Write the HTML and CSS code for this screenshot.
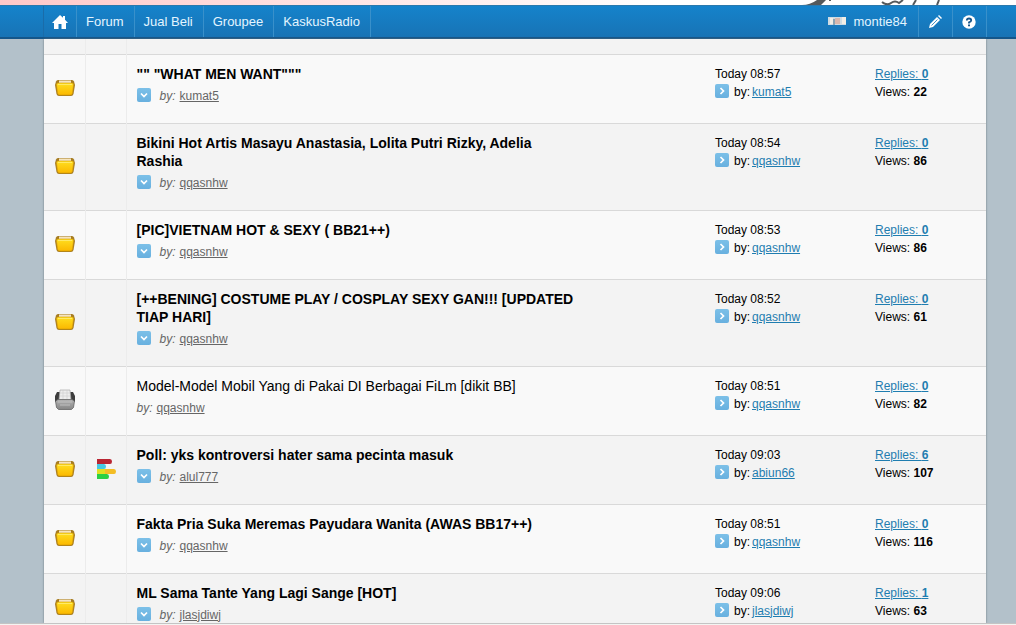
FILE: index.html
```html
<!DOCTYPE html>
<html lang="id">
<head>
<meta charset="utf-8">
<title>Forum</title>
<link rel="stylesheet" href="styles.css">
</head>
<body>
<svg class="defs" aria-hidden="true">
  <defs>
    <linearGradient id="gold" x1="0" y1="0" x2="0" y2="1"><stop offset="0" stop-color="#ffdf20"/><stop offset="1" stop-color="#fbb800"/></linearGradient>
    <linearGradient id="grey" x1="0" y1="0" x2="0" y2="1"><stop offset="0" stop-color="#b4b4b4"/><stop offset="1" stop-color="#858585"/></linearGradient>
    <linearGradient id="sky" x1="0" y1="0" x2="0" y2="1"><stop offset="0" stop-color="#7cc0e8"/><stop offset="1" stop-color="#68b0df"/></linearGradient>
  </defs>
  <symbol id="folder" viewBox="0 0 22 18">
    <path d="M4 1h14q1.500 0 2 1.500L21 6l-1.500 9q-.5 2-2.500 2H5q-2 0-2.500-2L1 6l1-3.500Q2.500 1 4 1z" fill="#a67c22"/>
    <path d="M5 1.500h12v3H5z" fill="#f5e4c0"/>
    <path d="M2.500 5.500Q2.500 4 4 4h14q1.500 0 1.500 1.500l-1 8.500q-.3 2-2 2h-11q-1.700 0-2-2z" fill="url(#gold)" stroke="#d39a08" stroke-width=".6"/>
    <path d="M4 5.500h14" stroke="#ffea66"/>
  </symbol>
  <symbol id="folder-closed" viewBox="0 0 22 22">
    <path d="M3 3h4v10H1V7zM15 3h4l2 4v6h-6z" fill="#3d3d3d"/>
    <path d="M6 1h10l1 10H5z" fill="#ededed" stroke="#aaa" stroke-width=".7"/>
    <path d="M6 4h10M6 7h10M9 1v10M13 1v10" stroke="#ccc" stroke-width=".6"/>
    <path d="M1.500 12L4 10.500h14l2.500 1.500-1 6.500-2 2h-13l-2-2z" fill="url(#grey)" stroke="#646464" stroke-width=".8"/>
    <path d="M4 13h14M6 16h10" stroke="#c8c8c8" stroke-width=".8"/>
  </symbol>
  <symbol id="down" viewBox="0 0 14 14"><rect width="14" height="14" rx="2" fill="url(#sky)"/><path d="M4 5.500l3 3 3-3" fill="none" stroke="#fff" stroke-width="1.700"/></symbol>
  <symbol id="next" viewBox="0 0 14 14"><rect width="14" height="14" rx="2" fill="url(#sky)"/><path d="M5.500 4l3 3-3 3" fill="none" stroke="#fff" stroke-width="1.700"/></symbol>
</svg>

<div class="banner">
  <svg class="script" viewBox="0 0 150 5" aria-hidden="true"><path d="M2 5q8 0 15-5h9l-5 5z" fill="#55595b"/><g fill="none" stroke="#55595b" stroke-width="2"><path d="M30 0v1M82 2q5 4 9 1t8 0l4-3M113 5l3-5M137 5l2-5"/></g></svg>
</div>
<nav class="bar">
  <div class="bar-inner">
    <a class="tab home" href="#" aria-label="Home"><svg width="16" height="14" viewBox="0 0 16 14"><path d="M8 0l3 2.800V1h2v3.700L16 8h-2v6H9.500V9h-3v5H2V8H0z" fill="#fff"/></svg></a>
    <a class="tab" href="#">Forum</a>
    <a class="tab" href="#">Jual Beli</a>
    <a class="tab" href="#">Groupee</a>
    <a class="tab" href="#">KaskusRadio</a>
    <a class="user" href="#"><svg width="18" height="8" viewBox="0 0 18 8" aria-hidden="true"><path d="M0 0h18v8H0z" fill="#cfdbe2"/><path d="M2 1h3v6H2zM14 0h4v7h-4z" fill="#f2eee6"/><path d="M7 1h5v6H7z" fill="#d9b7ad"/><path d="M5 2h2v6H5z" fill="#8ba3b3"/></svg>montie84</a>
    <a class="tool" href="#" aria-label="Edit"><svg width="14" height="14" viewBox="0 0 14 14"><path d="M1 13l1-4 7-7 3 3-7 7z" fill="#fff"/><path d="M10 1l1-1 3 3-1 1z" fill="#fff"/><path d="M3.500 10.500l6-6" stroke="#1878ba" stroke-width=".8"/></svg></a>
    <a class="tool" href="#" aria-label="Help"><svg width="14" height="14" viewBox="0 0 14 14"><circle cx="7" cy="7" r="6.700" fill="#fff"/><path d="M4.800 5.500q0-2 2.200-2t2.200 1.900Q9.200 6.500 7 7.300v1.200" fill="none" stroke="#16558a" stroke-width="1.800"/><path d="M6 9.500h2v1.700H6z" fill="#16558a"/></svg></a>
  </div>
</nav>
<main class="page">
  <table class="threads">
    <colgroup><col class="c-icon"><col class="c-icon"><col><col class="c-date"><col class="c-count"></colgroup>
    <tbody>
    <tr class="partial"><td></td><td></td><td></td><td></td><td></td></tr>
    <tr>
      <td class="icon"><svg class="folder"><use href="#folder"/></svg></td><td class="icon"></td>
      <td><a class="title" href="#">"" "WHAT MEN WANT"""</a><div class="by"><svg class="arrow"><use href="#down"/></svg><i>by:</i> <a href="#">kumat5</a></div></td>
      <td>Today 08:57<div class="last"><svg class="arrow"><use href="#next"/></svg>by: <a href="#">kumat5</a></div></td>
      <td><a href="#">Replies: <b>0</b></a><div>Views: <b>22</b></div></td>
    </tr>
    <tr>
      <td class="icon"><svg class="folder"><use href="#folder"/></svg></td><td class="icon"></td>
      <td><a class="title" href="#">Bikini Hot Artis Masayu Anastasia, Lolita Putri Rizky, Adelia Rashia</a><div class="by"><svg class="arrow"><use href="#down"/></svg><i>by:</i> <a href="#">qqasnhw</a></div></td>
      <td>Today 08:54<div class="last"><svg class="arrow"><use href="#next"/></svg>by: <a href="#">qqasnhw</a></div></td>
      <td><a href="#">Replies: <b>0</b></a><div>Views: <b>86</b></div></td>
    </tr>
    <tr>
      <td class="icon"><svg class="folder"><use href="#folder"/></svg></td><td class="icon"></td>
      <td><a class="title" href="#">[PIC]VIETNAM HOT &amp; SEXY ( BB21++)</a><div class="by"><svg class="arrow"><use href="#down"/></svg><i>by:</i> <a href="#">qqasnhw</a></div></td>
      <td>Today 08:53<div class="last"><svg class="arrow"><use href="#next"/></svg>by: <a href="#">qqasnhw</a></div></td>
      <td><a href="#">Replies: <b>0</b></a><div>Views: <b>86</b></div></td>
    </tr>
    <tr>
      <td class="icon"><svg class="folder"><use href="#folder"/></svg></td><td class="icon"></td>
      <td><a class="title" href="#">[++BENING] COSTUME PLAY / COSPLAY SEXY GAN!!! [UPDATED TIAP HARI]</a><div class="by"><svg class="arrow"><use href="#down"/></svg><i>by:</i> <a href="#">qqasnhw</a></div></td>
      <td>Today 08:52<div class="last"><svg class="arrow"><use href="#next"/></svg>by: <a href="#">qqasnhw</a></div></td>
      <td><a href="#">Replies: <b>0</b></a><div>Views: <b>61</b></div></td>
    </tr>
    <tr>
      <td class="icon"><svg class="closed"><use href="#folder-closed"/></svg></td><td class="icon"></td>
      <td><a class="title read" href="#">Model-Model Mobil Yang di Pakai DI Berbagai FiLm [dikit BB]</a><div class="by"><i>by:</i> <a href="#">qqasnhw</a></div></td>
      <td>Today 08:51<div class="last"><svg class="arrow"><use href="#next"/></svg>by: <a href="#">qqasnhw</a></div></td>
      <td><a href="#">Replies: <b>0</b></a><div>Views: <b>82</b></div></td>
    </tr>
    <tr>
      <td class="icon"><svg class="folder"><use href="#folder"/></svg></td>
      <td class="icon"><svg class="poll" viewBox="0 0 20 20"><path d="M1 0h13q2 0 2 2.500T14 5H1z" fill="#b92532"/><path d="M1 5h7q2 0 2 2.500T8 10H1z" fill="#45c9e4"/><path d="M1 10h17q2 0 2 2.500T18 15H1z" fill="#f3bd25"/><path d="M1 10h8v5H1z" fill="#dfe022"/><path d="M1 15h10q2 0 2 2.500T11 20H1z" fill="#2bd044"/></svg></td>
      <td><a class="title" href="#">Poll: yks kontroversi hater sama pecinta masuk</a><div class="by"><svg class="arrow"><use href="#down"/></svg><i>by:</i> <a href="#">alul777</a></div></td>
      <td>Today 09:03<div class="last"><svg class="arrow"><use href="#next"/></svg>by: <a href="#">abiun66</a></div></td>
      <td><a href="#">Replies: <b>6</b></a><div>Views: <b>107</b></div></td>
    </tr>
    <tr>
      <td class="icon"><svg class="folder"><use href="#folder"/></svg></td><td class="icon"></td>
      <td><a class="title" href="#">Fakta Pria Suka Meremas Payudara Wanita (AWAS BB17++)</a><div class="by"><svg class="arrow"><use href="#down"/></svg><i>by:</i> <a href="#">qqasnhw</a></div></td>
      <td>Today 08:51<div class="last"><svg class="arrow"><use href="#next"/></svg>by: <a href="#">qqasnhw</a></div></td>
      <td><a href="#">Replies: <b>0</b></a><div>Views: <b>116</b></div></td>
    </tr>
    <tr>
      <td class="icon"><svg class="folder"><use href="#folder"/></svg></td><td class="icon"></td>
      <td><a class="title" href="#">ML Sama Tante Yang Lagi Sange [HOT]</a><div class="by"><svg class="arrow"><use href="#down"/></svg><i>by:</i> <a href="#">jlasjdiwj</a></div></td>
      <td>Today 09:06<div class="last"><svg class="arrow"><use href="#next"/></svg>by: <a href="#">jlasjdiwj</a></div></td>
      <td><a href="#">Replies: <b>1</b></a><div>Views: <b>63</b></div></td>
    </tr>
    </tbody>
  </table>
</main>
<div class="edge"></div>
</body>
</html>
```
FILE: styles.css
```css
* { box-sizing: border-box; }
body {
  margin: 0;
  height: 100vh;
  overflow: hidden;
  display: flex;
  flex-direction: column;
  background: #b3c1ca;
  color: #000;
  font: 12px/18px "Liberation Sans", Arial, sans-serif;
}
.defs { position: absolute; width: 0; height: 0; }
.banner {
  flex: none;
  display: flex;
  justify-content: flex-end;
  height: 5px;
  padding-right: 66px;
  background: linear-gradient(90deg, #ffc8c8, #fff 65%);
}
.script { width: 150px; height: 5px; }
.bar {
  flex: none;
  height: 34px;
  padding: 0 29px 0 43px;
  background: linear-gradient(#1583cb, #1873b5);
  border-top: 1px solid #2a79ad;
  border-bottom: 2px solid #14568a;
}
.bar-inner { display: flex; height: 100%; border-left: 1px solid #1a6ca9; border-right: 1px solid #3990ca; }
.bar a {
  display: flex;
  align-items: center;
  color: #e4f5ff;
  font-size: 13px;
  text-decoration: none;
}
.bar .tab { padding: 0 10px 0 9px; border-right: 1px solid #3990ca; }
.bar .home { padding: 0 8px; }
.bar .user { margin-left: auto; gap: 8px; padding: 0 11px; }
.bar .user svg { margin-bottom: 2px; }
.bar .tool { justify-content: center; width: 34px; padding-right: 2px; border-left: 1px solid #3990ca; }
.page {
  flex: 1;
  min-height: 0;
  overflow: hidden;
  margin: 0 30px 0 44px;
  background: #f9f9f9;
  box-shadow: 0 0 2px #66737b;
}
.threads { width: 100%; border-collapse: collapse; table-layout: fixed; }
.c-icon { width: 41px; }
.c-date { width: 160px; }
.c-count { width: 121px; }
.threads tr { background: #f9f9f9; border-bottom: 1px solid #d9d9d9; }
.threads tr:nth-child(odd) { background: #f3f3f3; }
.threads td { padding: 10px 10px 18px; vertical-align: top; }
.threads .partial td { height: 15px; padding: 0; }
.threads td:nth-child(-n+2) { border-right: 1px solid #ececec; }
.threads .icon { padding: 0 0 2px 1px; text-align: center; vertical-align: middle; }
.threads a { color: #1f7db0; }
.threads .title {
  display: block;
  max-width: 440px;
  margin-bottom: 4px;
  color: #000;
  font-size: 14px;
  font-weight: bold;
  text-decoration: none;
}
.threads .read { font-weight: normal; }
.by, .last { display: flex; align-items: center; gap: 4px; }
.by { color: #666; }
.threads .by a { color: #666; }
.last { gap: 2px; }
.arrow { width: 14px; height: 14px; margin-bottom: 2px; }
.by .arrow { margin-right: 5px; }
.last .arrow { margin-right: 3px; }
.icon svg { display: block; margin: 0 auto; }
.folder { width: 22px; height: 18px; }
.closed { width: 22px; height: 22px; }
.poll { width: 20px; height: 20px; }
.edge { flex: none; height: 2px; background: #f4f4f2; border-top: 1px solid #c4c4c4; }
```
